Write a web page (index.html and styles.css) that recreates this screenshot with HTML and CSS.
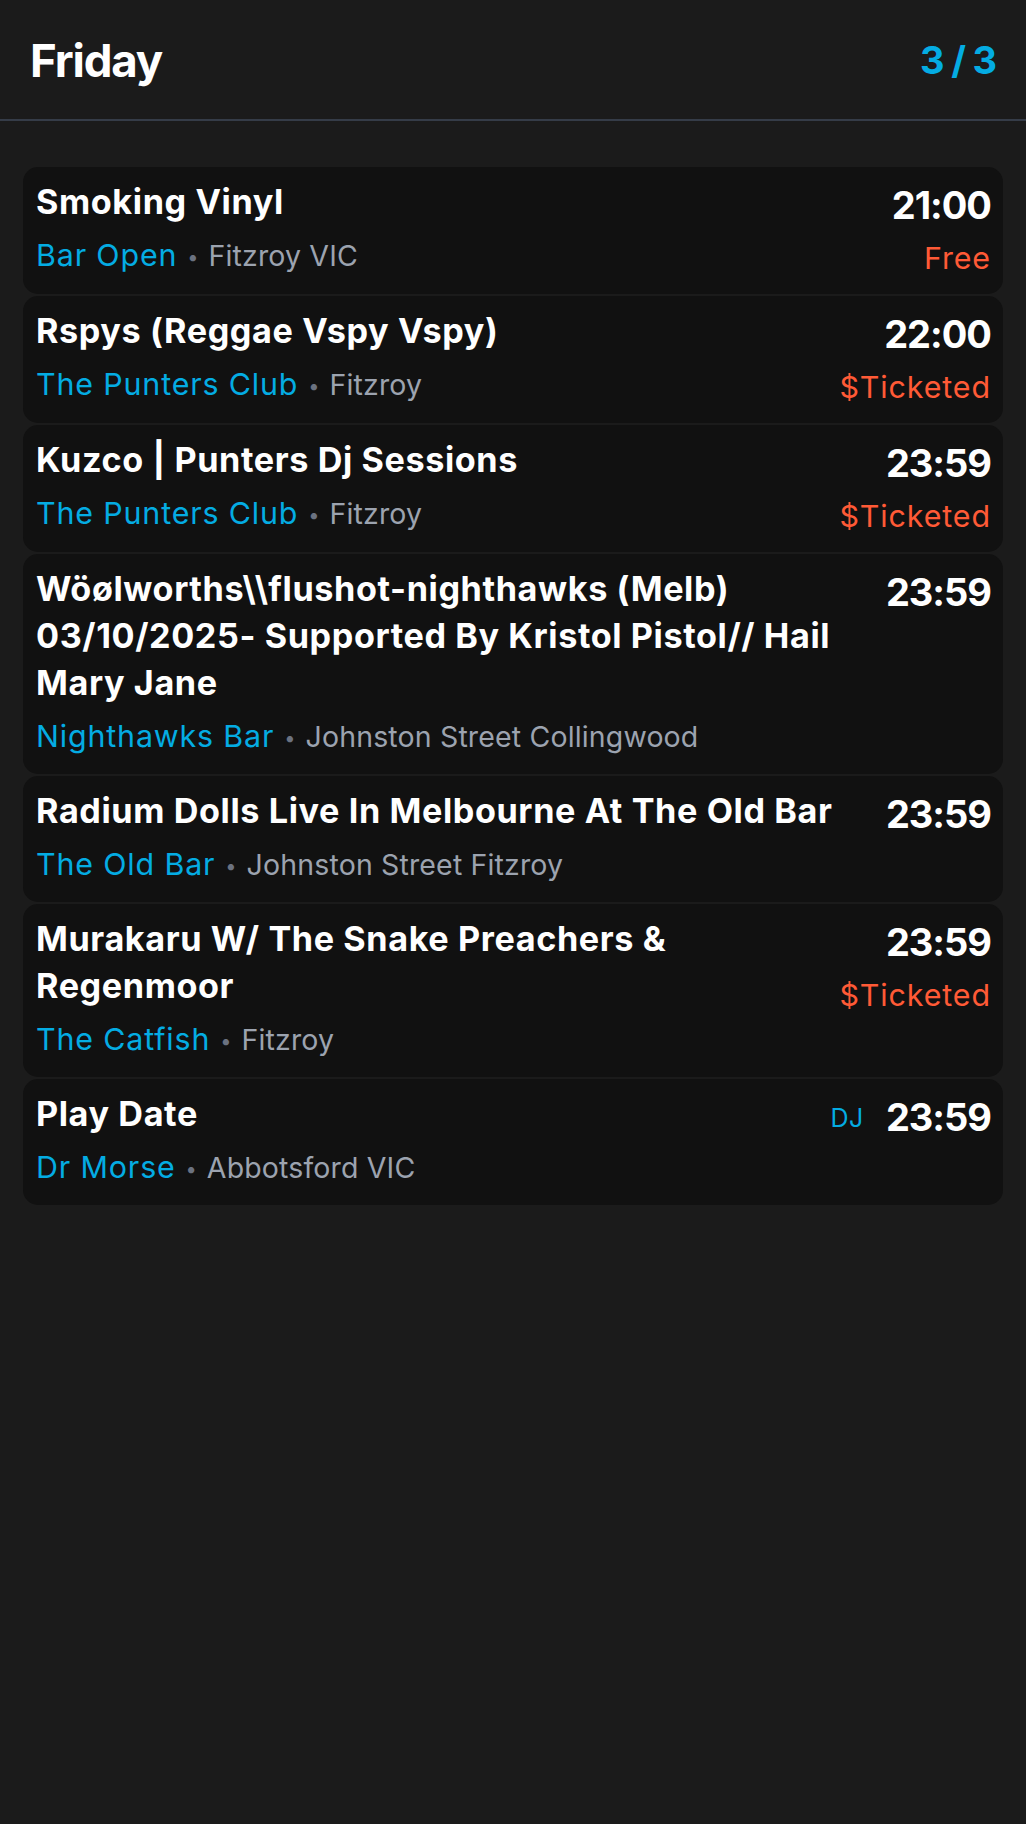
FILE: index.html
```html
<!DOCTYPE html>
<html lang="en">
<head>
<meta charset="utf-8">
<title>Friday</title>
<link rel="stylesheet" href="styles.css">
</head>
<body>
<header class="day-header">
  <h1 class="day-title">Friday</h1>
  <span class="day-count">3 / 3</span>
</header>
<main class="event-list">
  <article class="event-card">
    <div class="event-main">
      <h2 class="event-title">Smoking Vinyl</h2>
      <p class="event-meta"><span class="venue">Bar Open</span><span class="sep">•</span><span class="location">Fitzroy VIC</span></p>
    </div>
    <div class="event-side">
      <div class="time-row"><span class="time">21:00</span></div>
      <span class="price">Free</span>
    </div>
  </article>
  <article class="event-card">
    <div class="event-main">
      <h2 class="event-title">Rspys (Reggae Vspy Vspy)</h2>
      <p class="event-meta"><span class="venue">The Punters Club</span><span class="sep">•</span><span class="location">Fitzroy</span></p>
    </div>
    <div class="event-side">
      <div class="time-row"><span class="time">22:00</span></div>
      <span class="price">$Ticketed</span>
    </div>
  </article>
  <article class="event-card">
    <div class="event-main">
      <h2 class="event-title">Kuzco | Punters Dj Sessions</h2>
      <p class="event-meta"><span class="venue">The Punters Club</span><span class="sep">•</span><span class="location">Fitzroy</span></p>
    </div>
    <div class="event-side">
      <div class="time-row"><span class="time">23:59</span></div>
      <span class="price">$Ticketed</span>
    </div>
  </article>
  <article class="event-card">
    <div class="event-main">
      <h2 class="event-title">Wöølworths\\flushot-nighthawks (Melb) 03/10/2025- Supported By Kristol Pistol// Hail Mary Jane</h2>
      <p class="event-meta"><span class="venue">Nighthawks Bar</span><span class="sep">•</span><span class="location">Johnston Street Collingwood</span></p>
    </div>
    <div class="event-side">
      <div class="time-row"><span class="time">23:59</span></div>
    </div>
  </article>
  <article class="event-card">
    <div class="event-main">
      <h2 class="event-title">Radium Dolls Live In Melbourne At The Old Bar</h2>
      <p class="event-meta"><span class="venue">The Old Bar</span><span class="sep">•</span><span class="location">Johnston Street Fitzroy</span></p>
    </div>
    <div class="event-side">
      <div class="time-row"><span class="time">23:59</span></div>
    </div>
  </article>
  <article class="event-card">
    <div class="event-main">
      <h2 class="event-title">Murakaru W/ The Snake Preachers &amp; Regenmoor</h2>
      <p class="event-meta"><span class="venue">The Catfish</span><span class="sep">•</span><span class="location">Fitzroy</span></p>
    </div>
    <div class="event-side">
      <div class="time-row"><span class="time">23:59</span></div>
      <span class="price">$Ticketed</span>
    </div>
  </article>
  <article class="event-card">
    <div class="event-main">
      <h2 class="event-title">Play Date</h2>
      <p class="event-meta"><span class="venue">Dr Morse</span><span class="sep">•</span><span class="location">Abbotsford VIC</span></p>
    </div>
    <div class="event-side">
      <div class="time-row"><span class="tag">DJ</span><span class="time">23:59</span></div>
    </div>
  </article>
</main>
</body>
</html>
```
FILE: styles.css
```css
html, body {
  margin: 0;
  padding: 0;
  background: #1b1b1b;
}
body {
  font-family: Inter, "Noto Sans", "Liberation Sans", sans-serif;
  color: #ffffff;
  min-height: 1824px;
}
.day-header {
  display: flex;
  justify-content: space-between;
  align-items: center;
  padding: 30px 30px 28px 30px;
  border-bottom: 2px solid #353c48;
}
.day-title {
  margin: 0;
  font-size: 45.6px;
  line-height: 61px;
  font-weight: 700;
  letter-spacing: -0.025em;
  color: #ffffff;
}
.day-count {
  font-size: 38px;
  line-height: 53px;
  font-weight: 700;
  letter-spacing: -0.03em;
  color: #04ace3;
}
.event-list {
  display: flex;
  flex-direction: column;
  gap: 2px;
  padding: 46px 23px;
}
.event-card {
  display: flex;
  gap: 23px;
  background: #111111;
  border-radius: 15px;
  padding: 12.2px 12px 12.2px 13px;
}
.event-main {
  flex: 1;
  min-width: 0;
}
.event-title {
  margin: 0;
  font-size: 34.2px;
  line-height: 46.7px;
  font-weight: 700;
  letter-spacing: 0.6px;
  color: #ffffff;
}
.event-meta {
  margin: 7.6px 0 0 0;
  font-size: 30.4px;
  line-height: 45.6px;
}
.venue {
  color: #04ace3;
  letter-spacing: 0.85px;
}
.sep {
  color: #6b7280;
  font-size: 20px;
  margin: 0 10px;
  vertical-align: 2px;
}
.location {
  color: #9ca3af;
  font-size: 28.5px;
  letter-spacing: 0.15px;
}
.event-side {
  display: flex;
  flex-direction: column;
  align-items: flex-end;
  flex-shrink: 0;
}
.time-row {
  display: flex;
  align-items: center;
  gap: 22px;
}
.time {
  font-size: 38px;
  line-height: 53.2px;
  font-weight: 700;
  letter-spacing: -1px;
  color: #ffffff;
}
.tag {
  font-size: 25px;
  letter-spacing: 0.5px;
  color: #04ace3;
}
.price {
  margin-top: 3.8px;
  font-size: 30.4px;
  line-height: 45.6px;
  letter-spacing: 0.9px;
  color: #ff5a36;
}
```
